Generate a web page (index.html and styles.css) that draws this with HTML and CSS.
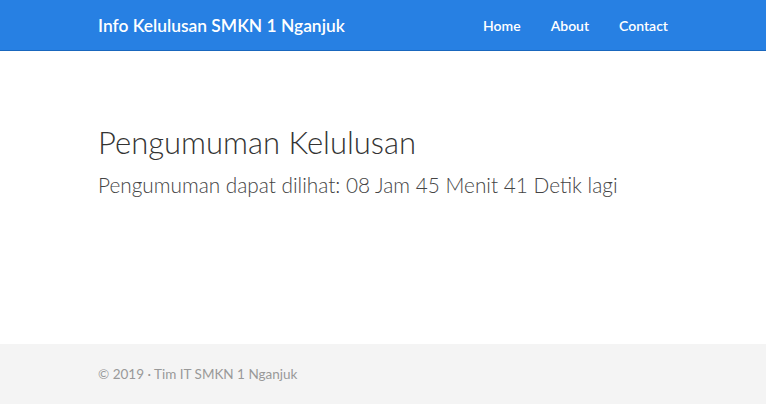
FILE: index.html
```html
<!DOCTYPE html>
<html lang="id">
<head>
<meta charset="utf-8">
<title>Info Kelulusan SMKN 1 Nganjuk</title>
<link rel="stylesheet" href="styles.css">
</head>
<body>
<div class="page">
  <nav class="navbar">
    <div class="container nav-inner">
      <a class="brand" href="#">Info Kelulusan SMKN 1 Nganjuk</a>
      <ul class="nav-links">
        <li><a href="#">Home</a></li>
        <li><a href="#">About</a></li>
        <li><a href="#">Contact</a></li>
      </ul>
    </div>
  </nav>
  <main class="main">
    <div class="container">
      <h1 class="title">Pengumuman Kelulusan</h1>
      <p class="lead">Pengumuman dapat dilihat: 08 Jam 45 Menit 41 Detik lagi</p>
    </div>
  </main>
  <footer class="footer">
    <div class="container">
      <p class="copy">© 2019 · Tim IT SMKN 1 Nganjuk</p>
    </div>
  </footer>
</div>
</body>
</html>
```
FILE: styles.css
```css
* { box-sizing: border-box; }
html, body { margin: 0; padding: 0; height: 100%; }
body {
  font-family: Lato, "Open Sans", "Noto Sans", sans-serif;
  color: #333;
  background: #fff;
}
.page {
  display: flex;
  flex-direction: column;
  min-height: 404px;
}
.container {
  width: 570px;
  margin: 0 auto;
}
.navbar {
  background: #2780e3;
  border-bottom: 1px solid #1967be;
  height: 51px;
}
.nav-inner {
  display: flex;
  align-items: center;
  justify-content: space-between;
  height: 50px;
}
.brand {
  color: #fff;
  text-decoration: none;
  font-size: 17.4px;
  font-weight: 600;
}
.nav-links {
  display: flex;
  list-style: none;
  margin: 0 -15px 0 0;
  padding: 0;
}
.nav-links a {
  display: block;
  padding: 0 15px;
  color: #fff;
  text-decoration: none;
  font-size: 14px;
  font-weight: 600;
}
.main {
  flex: 1;
  padding-top: 73px;
}
.title {
  margin: 0;
  font-size: 31px;
  font-weight: 300;
  line-height: 36px;
  color: #333;
}
.lead {
  margin: 12px 0 0;
  font-size: 20.8px;
  font-weight: 300;
  line-height: 26px;
  color: #444;
}
.footer {
  background: #f4f4f4;
  height: 60px;
  display: flex;
  align-items: center;
}
.copy {
  margin: 0;
  font-size: 13.5px;
  color: #999;
}
```
